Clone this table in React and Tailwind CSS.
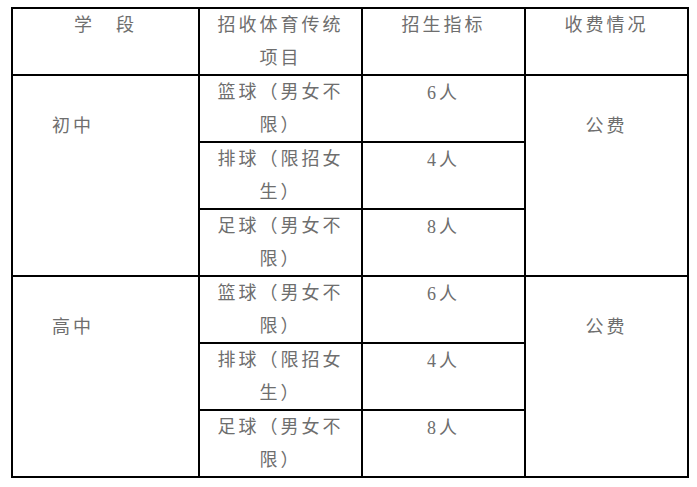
import React from "react";

function Cell({ children, className = "" }) {
  return (
    <div
      className={
        "border-r-2 border-b-2 border-black text-[18px] leading-[33px] tracking-[3px] text-[#6e6e6e] " +
        className
      }
    >
      {children}
    </div>
  );
}

const sections = [{ name: "初中" }, { name: "高中" }];

const items = [
  { sport: "篮球（男女不限）", count: "6人" },
  { sport: "排球（限招女生）", count: "4人" },
  { sport: "足球（男女不限）", count: "8人" },
];

export default function App() {
  return (
    <div className="w-[697px] h-[487px] bg-white pt-[7px] pl-[11px] font-['Liberation_Serif','Noto_Sans_CJK_SC',serif]">
      <div className="grid grid-cols-[187px_163px_163px_163px] grid-rows-[67px_67px_67px_67px_67px_67px_67px] w-[678px] border-l-2 border-t-2 border-black">
        <Cell className="text-center">学　段</Cell>
        <Cell className="text-center px-[12px]">招收体育传统项目</Cell>
        <Cell className="text-center">招生指标</Cell>
        <Cell className="text-center">收费情况</Cell>
        {sections.map((s) => (
          <React.Fragment key={s.name}>
            <Cell className="row-span-3 pl-[39px] pt-[34px]">{s.name}</Cell>
            <Cell className="text-center px-[12px]">{items[0].sport}</Cell>
            <Cell className="text-center pt-[1px]">{items[0].count}</Cell>
            <Cell className="row-span-3 text-center pt-[34px]">公费</Cell>
            {items.slice(1).map((it) => (
              <React.Fragment key={it.sport}>
                <Cell className="col-start-2 text-center px-[12px]">{it.sport}</Cell>
                <Cell className="text-center pt-[1px]">{it.count}</Cell>
              </React.Fragment>
            ))}
          </React.Fragment>
        ))}
      </div>
    </div>
  );
}
